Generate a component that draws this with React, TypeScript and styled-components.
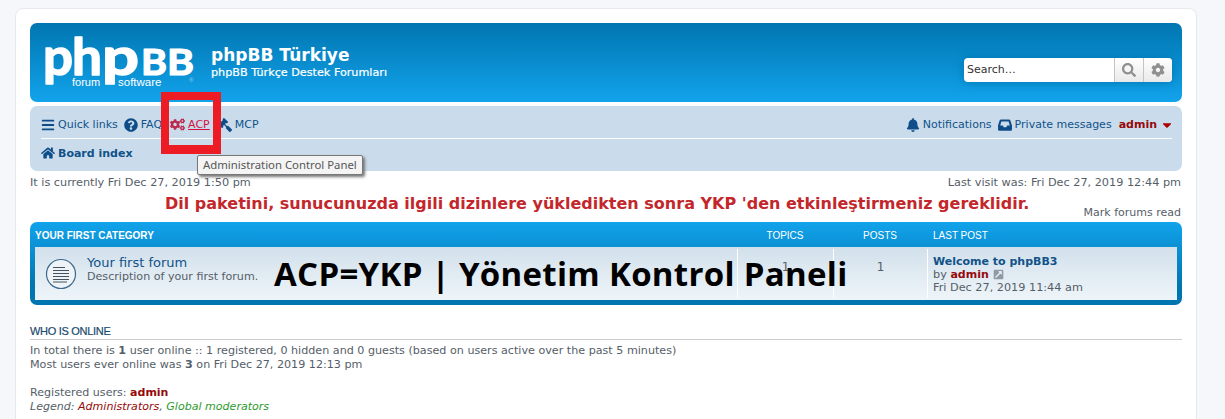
import React from "react"
import styled, {createGlobalStyle} from "styled-components"
import {
  FaBars, FaQuestionCircle, FaCogs, FaGavel, FaBell, FaHome,
  FaSearch, FaCog, FaCaretDown, FaExternalLinkSquareAlt
} from "react-icons/fa"

const GlobalStyle = createGlobalStyle`
  html, body {
    margin: 0;
    background: #f5f7fa;
    height: 419px;
    overflow: hidden;
  }
  body {
    font-family: "DejaVu Sans", Verdana, sans-serif;
    font-size: 11.25px;
    color: #555e68;
  }
`

const Wrap = styled.div`
  position: relative;
  box-sizing: border-box;
  width: 1182px;
  margin: 8px 0 0 15px;
  padding: 14px 14px 0;
  height: 420px;
  background: #fff;
  border: 1px solid #e6e9ed;
  border-radius: 8px;
`

const Headerbar = styled.div`
  display: flex;
  justify-content: space-between;
  height: 79px;
  padding: 0 10px 0 14px;
  border-radius: 7px;
  background: linear-gradient(#0076b1, #12a3eb);
  color: #fff;
`

const Logo = styled.svg`
  width: 152px;
  height: 79px;
  flex: none;
`

const SiteDesc = styled.div`
  flex: 1;
  margin: 21px 0 0 15px;
`

const SiteTitle = styled.div`
  font-size: 17px;
  line-height: 22px;
  font-weight: bold;
`

const SiteSub = styled.div`
  font-size: 11.2px;
  line-height: 14px;
  -webkit-text-stroke: 0.2px #fff;
`

const SearchBox = styled.div`
  display: flex;
  align-self: flex-start;
  margin-top: 35px;
  height: 24px;
  border-radius: 4px;
  overflow: hidden;
  background: #fff;
  box-shadow: 0 0 10px #0075b0;
`

const SearchInput = styled.div`
  box-sizing: border-box;
  width: 150px;
  padding-left: 3px;
  font-size: 11px;
  line-height: 24px;
  color: #333;
`

const SearchButton = styled.div`
  display: flex;
  align-items: center;
  justify-content: center;
  width: 28px;
  border-left: 1px solid #c7c3bf;
  background: linear-gradient(#fff, #e9e9e9);
  color: #8f8f8f;
  font-size: 14px;
`

const Navbar = styled.div`
  margin-top: 4px;
  height: 65px;
  box-sizing: border-box;
  padding: 0 10px 0 11px;
  border-radius: 7px;
  background: #cadceb;
  color: #105289;
  font-size: 11px;
`

const NavRow = styled.div<{$first?: boolean}>`
  display: flex;
  align-items: center;
  box-sizing: border-box;
  height: ${p => (p.$first ? "33px" : "28px")};
  padding-top: ${p => (p.$first ? "5px" : "0")};
  border-bottom: ${p => (p.$first ? "1px solid #fff" : "none")};
`

const NavItem = styled.span<{$right?: boolean; $gap?: number}>`
  display: flex;
  align-items: center;
  gap: 3px;
  margin-left: ${p => (p.$right ? "auto" : "0")};
  margin-right: ${p => p.$gap ?? 8}px;
  white-space: nowrap;
  svg {
    font-size: 14px;
    color: #0f4d8a;
  }
`

const AcpLink = styled(NavItem)`
  color: #d31141;
  text-decoration: underline;
  svg {
    color: #bc2a4d;
    font-size: 15px;
  }
`

const BoardIndex = styled(NavItem)`
  font-weight: bold;
`

const FlippedGavel = styled(FaGavel)`
  transform: scaleX(-1);
`

const InboxIcon = styled.svg`
  width: 14px;
  height: 14px;
  flex: none;
`

const UserName = styled.span`
  display: flex;
  align-items: center;
  gap: 3px;
  margin-right: -2px;
  font-weight: bold;
  color: #950a0a;
  svg {
    font-size: 14px;
    color: #a00;
  }
`

const TimeRow = styled.div`
  display: flex;
  justify-content: space-between;
  margin-top: 5px;
  padding-right: 1px;
  line-height: 13px;
`

const Notice = styled.div`
  margin-top: 5px;
  padding-left: 135px;
  font-size: 16px;
  line-height: 20px;
  font-weight: bold;
  color: #c3272b;
  white-space: nowrap;
`

const MarkRead = styled.div`
  margin-top: -8px;
  padding-right: 1px;
  text-align: right;
  font-size: 11px;
  line-height: 13px;
`

const ForumBlock = styled.div`
  margin-top: 3px;
  height: 83px;
  box-sizing: border-box;
  padding: 0 5px 5px;
  border-radius: 7px;
  background: linear-gradient(#12a3eb 0%, #0076b1 75%, #0076b1 100%);
`

const Columns = styled.div`
  display: grid;
  grid-template-columns: 702px 96px 94px 1fr;
`

const ColHead = styled(Columns)`
  height: 25px;
  line-height: 27px;
  font-family: "Liberation Sans", Arial, sans-serif;
  font-size: 10px;
  color: #fff;
`

const HeadCell = styled.div<{$center?: boolean; $lead?: number}>`
  text-align: ${p => (p.$center ? "center" : "left")};
  padding-left: ${p => p.$lead ?? 0}px;
  font-weight: ${p => (p.$center || p.$lead ? "normal" : "bold")};
  white-space: nowrap;
`

const ForumRow = styled(Columns)`
  height: 53px;
  background: linear-gradient(#d2e0eb, #eef5f9);
`

const ForumCell = styled.div`
  display: flex;
  align-items: center;
  gap: 10px;
  padding-left: 10px;
`

const ForumIcon = styled.svg`
  width: 32px;
  height: 32px;
  flex: none;
`

const ForumText = styled.div`
  margin-top: -10px;
`

const ForumTitle = styled.div`
  font-size: 13px;
  line-height: 15px;
  color: #105289;
`

const ForumDesc = styled.div`
  font-size: 11.1px;
  line-height: 13px;
`

const CountCell = styled.div`
  margin: 2px 0;
  text-align: center;
  line-height: 36px;
  font-size: 12px;
  border-left: 1px solid #fff;
`

const LastPostCell = styled.div`
  margin: 2px 0;
  padding: 6px 0 0 5px;
  line-height: 13px;
  border-left: 1px solid #fff;
`

const PostLink = styled.div`
  font-size: 11px;
  font-weight: bold;
  color: #105289;
`

const AuthorName = styled.b`
  font-size: 11px;
  color: #950a0a;
`

const ByLine = styled.div`
  display: flex;
  align-items: center;
  gap: 4px;
  svg {
    color: #8f9aa5;
    font-size: 11px;
  }
`

const OnlineHeading = styled.h3`
  margin: 20px 0 0;
  padding-bottom: 1px;
  font-family: "Liberation Sans", Arial, sans-serif;
  font-size: 11px;
  line-height: 13px;
  letter-spacing: -0.3px;
  font-weight: normal;
  color: #1b4a6e;
  border-bottom: 1px solid #ccc;
  -webkit-text-stroke: 0.2px #1b4a6e;
`

const OnlineText = styled.p`
  margin: 4px 0 0;
  font-size: 11.15px;
  line-height: 14px;
`

const Gap = styled.div`
  height: 14px;
`

const UsersLine = styled.div`
  font-size: 11.1px;
  line-height: 14px;
`

const Legend = styled.div`
  font-size: 11.05px;
  font-style: italic;
  line-height: 14px;
`

const Coloured = styled.span<{$color: string}>`
  color: ${p => p.$color};
`

const RedBox = styled.div`
  position: absolute;
  left: 145px;
  top: 83px;
  width: 60px;
  height: 62px;
  box-sizing: border-box;
  border: 8px solid #ed1c24;
  border-bottom-width: 9px;
`

const Tooltip = styled.div`
  position: absolute;
  left: 181px;
  top: 146px;
  padding: 0 5px;
  height: 20px;
  line-height: 18px;
  box-sizing: border-box;
  font-family: "Noto Sans", sans-serif;
  font-size: 11.35px;
  color: #575757;
  background: #f4f4f4;
  border: 1px solid #777;
  border-radius: 2px;
  box-shadow: 2px 2px 3px #777;
  white-space: nowrap;
`

const BigCaption = styled.div`
  position: absolute;
  left: 258px;
  top: 243px;
  font-family: "Open Sans", sans-serif;
  font-size: 33px;
  letter-spacing: 0.3px;
  line-height: 44px;
  font-weight: 700;
  color: #000;
  white-space: nowrap;
`

function PhpbbLogo(){
  const letter = {fontFamily: "Lato, sans-serif", fontWeight: 700, fill: "#fff", stroke: "#fff", strokeLinejoin: "round" as const, lengthAdjust: "spacingAndGlyphs"}
  return (
    <Logo viewBox="0 0 152 79">
      <text {...letter} x="-1" y="52" fontSize="51" strokeWidth="1.5" textLength="30">p</text>
      <text {...letter} x="28" y="52" fontSize="51" strokeWidth="1.5" textLength="30">h</text>
      <text {...letter} x="58" y="52" fontSize="51" strokeWidth="1.5" textLength="37">p</text>
      <text {...letter} x="97" y="52" fontSize="37" strokeWidth="1.2" textLength="26">B</text>
      <text {...letter} x="123" y="52" fontSize="37" strokeWidth="1.2" textLength="27">B</text>
      <text x="28" y="63" fontFamily="Liberation Sans, sans-serif" fontSize="11" fill="#fff">forum</text>
      <text x="74" y="63" fontFamily="Liberation Sans, sans-serif" fontSize="11.5" fill="#fff">software</text>
      <text x="145" y="59" fontFamily="Liberation Sans, sans-serif" fontSize="6" fill="#9fd2ee">®</text>
    </Logo>
  )
}

function ForumGlyph(){
  return (
    <ForumIcon viewBox="0 0 32 32">
      <circle cx="16" cy="16" r="14.5" fill="#eef3f7" stroke="#3f6a8f" strokeWidth="1.2"/>
      <path d="M8 9.5h12M8 12.5h16M8 15.5h16M8 18.5h16M8 21.5h16M8 24h14" stroke="#46525e" strokeWidth="1"/>
    </ForumIcon>
  )
}

function Inbox(){
  return (
    <InboxIcon viewBox="0 0 14 14">
      <path fillRule="evenodd" fill="#0f4d8a" d="M3 1.5h8a1.5 1.5 0 0 1 1.4 1L14 7.5v4a1.2 1.2 0 0 1-1.2 1.2H1.2A1.2 1.2 0 0 1 0 11.5v-4l1.6-5a1.5 1.5 0 0 1 1.4-1zM3.4 3.4 2.2 7.4h2.6l.9 1.8h2.6l.9-1.8h2.6l-1.2-4z"/>
    </InboxIcon>
  )
}

export default function App(){
  return (
    <>
      <GlobalStyle/>
      <Wrap>
        <Headerbar>
          <PhpbbLogo/>
          <SiteDesc>
            <SiteTitle>phpBB Türkiye</SiteTitle>
            <SiteSub>phpBB Türkçe Destek Forumları</SiteSub>
          </SiteDesc>
          <SearchBox>
            <SearchInput>Search…</SearchInput>
            <SearchButton><FaSearch/></SearchButton>
            <SearchButton><FaCog/></SearchButton>
          </SearchBox>
        </Headerbar>
        <Navbar>
          <NavRow $first>
            <NavItem $gap={6}><FaBars/>Quick links</NavItem>
            <NavItem><FaQuestionCircle/>FAQ</NavItem>
            <AcpLink><FaCogs/>ACP</AcpLink>
            <NavItem><FlippedGavel/>MCP</NavItem>
            <NavItem $right $gap={6}><FaBell/>Notifications</NavItem>
            <NavItem $gap={7}><Inbox/>Private messages</NavItem>
            <UserName>admin <FaCaretDown/></UserName>
          </NavRow>
          <NavRow>
            <BoardIndex><FaHome/>Board index</BoardIndex>
          </NavRow>
        </Navbar>
        <TimeRow>
          <span>It is currently Fri Dec 27, 2019 1:50 pm</span>
          <span>Last visit was: Fri Dec 27, 2019 12:44 pm</span>
        </TimeRow>
        <Notice>Dil paketini, sunucunuzda ilgili dizinlere yükledikten sonra YKP 'den etkinleştirmeniz gereklidir.</Notice>
        <MarkRead>Mark forums read</MarkRead>
        <ForumBlock>
          <ColHead>
            <HeadCell>YOUR FIRST CATEGORY</HeadCell>
            <HeadCell $center>TOPICS</HeadCell>
            <HeadCell $center>POSTS</HeadCell>
            <HeadCell $lead={6}>LAST POST</HeadCell>
          </ColHead>
          <ForumRow>
            <ForumCell>
              <ForumGlyph/>
              <ForumText>
                <ForumTitle>Your first forum</ForumTitle>
                <ForumDesc>Description of your first forum.</ForumDesc>
              </ForumText>
            </ForumCell>
            <CountCell>1</CountCell>
            <CountCell>1</CountCell>
            <LastPostCell>
              <PostLink>Welcome to phpBB3</PostLink>
              <ByLine>
                <span>by <AuthorName>admin</AuthorName></span>
                <FaExternalLinkSquareAlt/>
              </ByLine>
              <div>Fri Dec 27, 2019 11:44 am</div>
            </LastPostCell>
          </ForumRow>
        </ForumBlock>
        <OnlineHeading>WHO IS ONLINE</OnlineHeading>
        <OnlineText>
          In total there is <b>1</b> user online :: 1 registered, 0 hidden and 0 guests (based on users active over the past 5 minutes)
          <br/>
          Most users ever online was <b>3</b> on Fri Dec 27, 2019 12:13 pm
        </OnlineText>
        <Gap/>
        <UsersLine>Registered users: <AuthorName>admin</AuthorName></UsersLine>
        <Legend>
          Legend: <Coloured $color="#950a0a">Administrators</Coloured>, <Coloured $color="#2e9a2e">Global moderators</Coloured>
        </Legend>
        <RedBox/>
        <Tooltip>Administration Control Panel</Tooltip>
        <BigCaption>ACP=YKP | Yönetim Kontrol Paneli</BigCaption>
      </Wrap>
    </>
  )
}
